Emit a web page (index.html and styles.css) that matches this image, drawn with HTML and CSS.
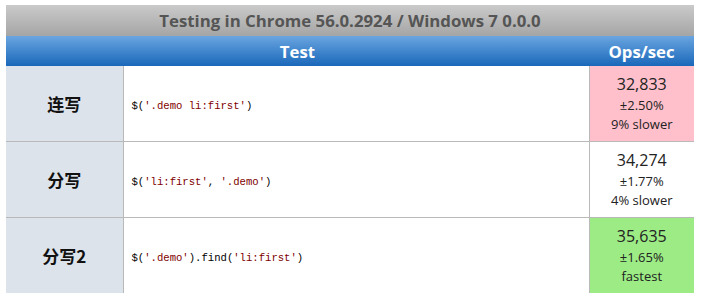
FILE: index.html
```html
<!DOCTYPE html>
<html lang="en">
<head>
    <meta charset="UTF-8">
    <title>jsPerf results</title>
    <link rel="stylesheet" href="styles.css">
</head>
<body>

    <table class="results">
        <caption>Testing in Chrome 56.0.2924 / Windows 7 0.0.0</caption>
        <colgroup>
            <col class="col-label">
            <col>
            <col class="col-ops">
        </colgroup>
        <thead>
            <tr>
                <th colspan="2">Test</th>
                <th>Ops/sec</th>
            </tr>
        </thead>
        <tbody>
            <tr>
                <th class="label">连写</th>
                <td class="code"><code>$(<span class="str">'.demo li:first'</span>)</code></td>
                <td class="ops slowest">
                    <div class="num">32,833</div>
                    <div class="small">±2.50%</div>
                    <div class="small">9% slower</div>
                </td>
            </tr>
            <tr>
                <th class="label">分写</th>
                <td class="code"><code>$(<span class="str">'li:first'</span>, <span class="str">'.demo'</span>)</code></td>
                <td class="ops">
                    <div class="num">34,274</div>
                    <div class="small">±1.77%</div>
                    <div class="small">4% slower</div>
                </td>
            </tr>
            <tr>
                <th class="label">分写2</th>
                <td class="code"><code>$(<span class="str">'.demo'</span>).find(<span class="str">'li:first'</span>)</code></td>
                <td class="ops fastest">
                    <div class="num">35,635</div>
                    <div class="small">±1.65%</div>
                    <div class="small">fastest</div>
                </td>
            </tr>
        </tbody>
    </table>

</body>
</html>
```

FILE: styles.css
```css
body {
    margin: 0;
    padding: 5px 8px 0 6px;
    background: #fff;
    font-family: 'Open Sans', 'Noto Sans CJK SC', sans-serif;
}

.results {
    width: 688px;
    border-collapse: collapse;
    table-layout: fixed;
}

.results .col-label {
    width: 117px;
}

.results .col-ops {
    width: 105px;
}

.results caption {
    height: 31px;
    line-height: 31px;
    font-size: 16.8px;
    font-weight: bold;
    color: #555;
    background: linear-gradient(#cacaca, #a5a5a5);
}

.results thead th {
    height: 30px;
    padding: 0;
    font-size: 16.8px;
    font-weight: bold;
    color: #fff;
    background: linear-gradient(#6aa5e0, #1a68ba);
}

.results tbody tr {
    height: 75px;
}

.results tbody tr + tr {
    height: 76px;
}

.results tbody tr + tr td,
.results tbody tr + tr th {
    border-top: 1px solid #b9b9b9;
}

.label {
    padding: 0;
    background: #dde3ea;
    border-right: 1px solid #b9b9b9;
    font-family: 'Noto Sans CJK SC', 'Open Sans', sans-serif;
    font-size: 17px;
    font-weight: bold;
    color: #111;
}

.code {
    padding: 0 8px;
    border-right: 1px solid #b9b9b9;
}

.code code {
    font-family: 'Liberation Mono', monospace;
    font-size: 10.6px;
    color: #000;
}

.code .str {
    color: #800000;
}

.ops {
    padding: 0;
    text-align: center;
    color: #222;
}

.ops .num {
    font-size: 16px;
    line-height: 24px;
}

.ops .small {
    font-size: 13px;
    line-height: 19px;
}

.slowest {
    background: #ffc0cb;
}

.fastest {
    background: #9ceb85;
}
```
